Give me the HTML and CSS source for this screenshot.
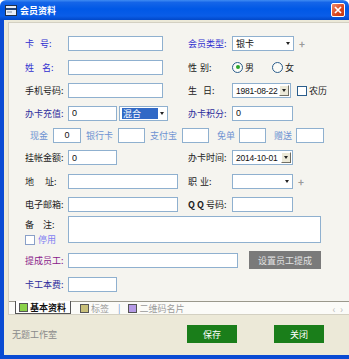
FILE: index.html
```html
<!DOCTYPE html>
<html>
<head>
    <meta charset="utf-8">
    <title>会员资料</title>
    <link rel="stylesheet" href="styles.css">
</head>
<body>
<div class="window">
    <div class="titlebar">
        <svg class="app-icon" width="12" height="11" viewBox="0 0 12 11">
            <rect x="0.5" y="0.5" width="11" height="10" fill="#e8eef8" stroke="#20304a"/>
            <rect x="1" y="3" width="10" height="2" fill="#22447a"/>
            <rect x="2" y="6.5" width="5" height="1" fill="#7a8aa0"/>
        </svg>
        <span class="title">会员资料</span>
        <span class="close-btn">
            <svg width="8" height="8" viewBox="0 0 8 8"><path d="M1 1L7 7M7 1L1 7" stroke="#fff" stroke-width="1.7"/></svg>
        </span>
    </div>
    <div class="frame">
        <div class="client">
            <div class="panel">
                <div class="form">
                    <!-- card no / member type -->
                    <div class="row r23">
                        <div class="half">
                            <label class="lbl blue">卡<i class="sp6"></i>号:</label>
                            <input class="w95" type="text">
                        </div>
                        <div class="half">
                            <label class="lbl lbl-r blue">会员类型:</label>
                            <div class="combo w62"><span>银卡</span><b class="arrow"></b></div>
                            <span class="plus">+</span>
                        </div>
                    </div>
                    <!-- name / sex -->
                    <div class="row r24">
                        <div class="half">
                            <label class="lbl blue">姓<i class="sp8"></i>名:</label>
                            <input class="w95" type="text">
                        </div>
                        <div class="half">
                            <label class="lbl lbl-r">性<i class="sp3"></i>别:</label>
                            <span class="radio checked"></span><span class="opt">男</span>
                            <span class="radio radio-2"></span><span class="opt">女</span>
                        </div>
                    </div>
                    <!-- phone / birthday -->
                    <div class="row r23">
                        <div class="half">
                            <label class="lbl">手机号码:</label>
                            <input class="w95" type="text">
                        </div>
                        <div class="half">
                            <label class="lbl lbl-r">生<i class="sp6"></i>日:</label>
                            <div class="combo date w59"><span>1981-08-22</span><b class="drop-btn"><b class="arrow"></b></b></div>
                            <span class="check"></span><span class="opt">农历</span>
                        </div>
                    </div>
                    <!-- recharge / points -->
                    <div class="row r22">
                        <div class="half">
                            <label class="lbl navy">办卡充值:</label>
                            <input class="w49" type="text" value="0">
                            <div class="combo mixed w49"><span class="sel">混合</span><b class="arrow"></b></div>
                        </div>
                        <div class="half">
                            <label class="lbl lbl-r navy">办卡积分:</label>
                            <input class="w61" type="text" value="0">
                        </div>
                    </div>
                    <!-- payment split -->
                    <div class="row r22 pay">
                        <span class="pay-lbl">现金</span>
                        <input class="w28 num" type="text" value="0">
                        <span class="pay-lbl">银行卡</span>
                        <input class="w27" type="text">
                        <span class="pay-lbl">支付宝</span>
                        <input class="w27" type="text">
                        <span class="pay-lbl wide">免单</span>
                        <input class="w27" type="text">
                        <span class="pay-lbl wide">赠送</span>
                        <input class="w28" type="text">
                    </div>
                    <!-- on account / card date -->
                    <div class="row r23">
                        <div class="half">
                            <label class="lbl">挂帐金额:</label>
                            <input class="w49" type="text" value="0">
                        </div>
                        <div class="half">
                            <label class="lbl lbl-r">办卡时间:</label>
                            <div class="combo date w61"><span>2014-10-01</span><b class="drop-btn"><b class="arrow"></b></b></div>
                        </div>
                    </div>
                    <!-- address / job -->
                    <div class="row r24">
                        <div class="half">
                            <label class="lbl">地<i class="sp11"></i>址:</label>
                            <input class="w110" type="text">
                        </div>
                        <div class="half">
                            <label class="lbl lbl-r">职<i class="sp3"></i>业:</label>
                            <div class="combo w61"><span></span><b class="arrow"></b></div>
                            <span class="plus">+</span>
                        </div>
                    </div>
                    <!-- email / qq -->
                    <div class="row r22">
                        <div class="half">
                            <label class="lbl">电子邮箱:</label>
                            <input class="w110" type="text">
                        </div>
                        <div class="half">
                            <label class="lbl lbl-r"><b>Q</b> <b>Q</b> 号码:</label>
                            <input class="w61" type="text">
                        </div>
                    </div>
                    <!-- remark -->
                    <div class="row remark">
                        <div class="remark-side">
                            <label class="lbl">备<i class="sp9"></i>注:</label>
                            <div class="disabled-opt"><span class="check"></span><span>停用</span></div>
                        </div>
                        <textarea class="memo"></textarea>
                    </div>
                    <!-- commission staff -->
                    <div class="row r24">
                        <label class="lbl purple">提成员工:</label>
                        <input class="w170" type="text">
                        <span class="gray-btn">设置员工提成</span>
                    </div>
                    <!-- card fee -->
                    <div class="row r24">
                        <label class="lbl navy">卡工本费:</label>
                        <input class="w49" type="text">
                    </div>
                </div>
                <div class="tabs">
                    <span class="tab active"><i class="swatch green"></i>基本资料</span>
                    <span class="tab"><i class="swatch olive"></i>标签</span>
                    <span class="tab-sep">|</span>
                    <span class="tab"><i class="swatch violet"></i>二维码名片</span>
                    <span class="scroll">&lsaquo;&nbsp;&nbsp;&rsaquo;</span>
                </div>
            </div>
            <div class="footer">
                <span class="studio">无题工作室</span>
                <span class="green-btn">保存</span>
                <span class="green-btn">关闭</span>
            </div>
        </div>
    </div>
</div>
</body>
</html>
```

FILE: styles.css
```css
body {
    margin: 0;
    font-family: "Noto Sans CJK SC", "Liberation Sans", sans-serif;
    font-size: 9px;
    color: #222;
}
.window {
    width: 349px;
    height: 359px;
    display: flex;
    flex-direction: column;
}
.titlebar {
    height: 20px;
    display: flex;
    align-items: center;
    padding: 0 4px 0 5px;
    background: linear-gradient(to bottom, #3f8cf3 0%, #1565e8 12%, #0058e6 45%, #0a5de8 80%, #0148c9 100%);
    border-radius: 6px 6px 0 0;
    box-sizing: border-box;
}
.app-icon {
    margin-right: 3px;
}
.title {
    color: #fff;
    font-weight: bold;
    font-size: 9px;
    flex: 1;
}
.close-btn {
    width: 14px;
    height: 14px;
    box-sizing: border-box;
    border: 1px solid #fff;
    border-radius: 2px;
    background: linear-gradient(135deg, #f08a6a, #d9461e 60%, #c23a14);
    display: flex;
    align-items: center;
    justify-content: center;
}
.frame {
    flex: 1;
    display: flex;
    padding: 0 4px 4px 4px;
    background: #0a4bd3;
}
.client {
    flex: 1;
    background: #ece9d8;
    display: flex;
    flex-direction: column;
}
.panel {
    margin: 2px 3px 0 4px;
    border: 1px solid #d3d0c2;
    border-bottom: none;
    background: #f5f4ef;
}
.form {
    padding: 9px 0 5px 16px;
}
.row {
    display: flex;
    align-items: center;
}
.r22 { height: 22px; }
.r23 { height: 23px; }
.r24 { height: 24px; }
.half {
    display: flex;
    align-items: center;
    width: 163px;
}
.lbl {
    width: 43px;
    flex-shrink: 0;
    white-space: nowrap;
}
.lbl-r {
    width: 44px;
}
.lbl i {
    display: inline-block;
}
.sp3 { width: 3px; }
.sp6 { width: 6px; }
.sp8 { width: 8px; }
.sp9 { width: 9px; }
.sp11 { width: 11px; }
.blue { color: #2f2fd0; }
.navy { color: #2d2d9c; }
.purple { color: #8a1a8a; }
input, .combo, textarea {
    height: 15px;
    box-sizing: border-box;
    border: 1px solid #8fb0cf;
    background: #fff;
    font-family: "Liberation Sans", "Noto Sans CJK SC", sans-serif;
    font-size: 9px;
    padding: 0 3px;
    margin: 0;
    color: #111;
}
.w27 { width: 27px; }
.w28 { width: 28px; }
.w49 { width: 49px; }
.w59 { width: 59px; }
.w61 { width: 61px; }
.w62 { width: 62px; }
.w95 { width: 95px; }
.w110 { width: 110px; }
.w170 { width: 170px; }
.num { text-align: center; }
.combo {
    display: flex;
    align-items: center;
    justify-content: space-between;
    font-family: "Noto Sans CJK SC", sans-serif;
    padding-right: 3px;
}
.arrow {
    width: 0;
    height: 0;
    border-left: 2.5px solid transparent;
    border-right: 2.5px solid transparent;
    border-top: 3px solid #222;
}
.combo.date {
    font-family: "Liberation Sans", sans-serif;
    font-size: 8.5px;
    padding-right: 1px;
    letter-spacing: -0.2px;
}
.drop-btn {
    width: 10px;
    height: 11px;
    box-sizing: border-box;
    background: #ece9d8;
    border: 1px solid;
    border-color: #fff #716f64 #716f64 #fff;
    display: flex;
    align-items: center;
    justify-content: center;
}
.mixed {
    margin-left: 2px;
    padding-left: 2px;
}
.sel {
    background: #3169c6;
    color: #fff;
    width: 35px;
    height: 11px;
    line-height: 11px;
    padding-left: 1px;
}
.plus {
    color: #9a9a9a;
    font-weight: bold;
    font-size: 10px;
    margin-left: 5px;
}
.radio {
    width: 11px;
    height: 11px;
    box-sizing: border-box;
    border: 1px solid #2a5d8c;
    border-radius: 50%;
    background: #fbfbf7;
    display: inline-flex;
    align-items: center;
    justify-content: center;
}
.radio.checked::after {
    content: "";
    width: 4px;
    height: 4px;
    border-radius: 50%;
    background: #2aa52a;
}
.radio-2 {
    margin-left: 18px;
}
.opt {
    margin-left: 2px;
}
.check {
    width: 10px;
    height: 10px;
    box-sizing: border-box;
    border: 1px solid #2a5d8c;
    background: #fff;
    margin-left: 6px;
    display: inline-block;
}
.pay {
    padding-left: 5px;
}
.pay-lbl {
    color: #6d92d2;
    margin: 0 5px;
}
.pay-lbl:first-child {
    margin-left: 0;
}
.pay-lbl.wide {
    margin-left: 8px;
    margin-right: 4px;
}
.remark {
    height: 29px;
    margin-bottom: 4px;
    align-items: flex-start;
}
.remark-side {
    width: 43px;
    padding-top: 3px;
}
.disabled-opt {
    display: flex;
    align-items: center;
    color: #7f7ff2;
    margin-top: 2px;
}
.disabled-opt .check {
    margin: 0 3px 0 0;
    border-color: #8aa0c8;
}
.memo {
    width: 253px;
    height: 27px;
    margin-top: 1px;
    resize: none;
}
.gray-btn {
    width: 72px;
    height: 18px;
    margin-left: 11px;
    background: #7a7a7a;
    color: #e2e2e2;
    display: flex;
    align-items: center;
    justify-content: center;
}
.tabs {
    height: 14px;
    display: flex;
    align-items: center;
    border-top: 1px solid #9a988c;
    border-bottom: 1px solid #d3d0c2;
    background: #fbfbf8;
    padding-left: 6px;
    box-sizing: border-box;
}
.tab {
    display: flex;
    align-items: center;
    height: 12px;
    padding: 0 4px 0 3px;
    color: #9a9a9a;
    margin-right: 6px;
}
.tab.active {
    color: #111;
    font-weight: bold;
    background: #fff;
    border: 1px solid #555;
    border-top: none;
    margin-top: -1px;
}
.swatch {
    width: 7px;
    height: 7px;
    border: 1px solid #555;
    margin-right: 2px;
}
.green { background: #8bd24a; }
.olive { background: #c9c07a; }
.violet { background: #b59ae6; }
.tab-sep {
    color: #6a8bd0;
    margin: 0 5px 0 -1px;
}
.scroll {
    margin-left: auto;
    margin-right: 8px;
    color: #bbb;
    font-size: 10px;
}
.footer {
    flex: 1;
    display: flex;
    align-items: center;
    padding: 0 31px 2px 8px;
    gap: 37px;
}
.studio {
    color: #8a8a8a;
    margin-right: auto;
}
.green-btn {
    width: 50px;
    height: 18px;
    background: #1a7e1a;
    color: #fff;
    display: flex;
    align-items: center;
    justify-content: center;
}
```
